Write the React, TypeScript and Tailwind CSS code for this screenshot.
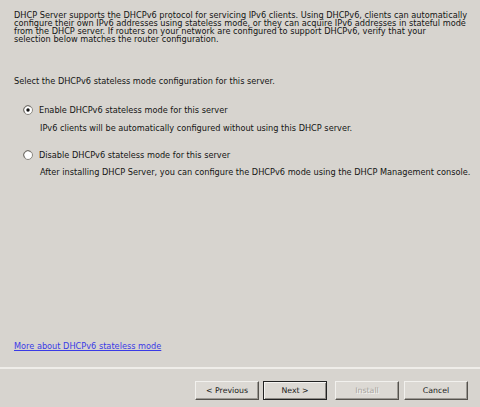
import React from "react"

const font = { fontFamily: '"DejaVu Sans", Tahoma, sans-serif' }

function Radio({ checked }: { checked?: boolean }) {
  return (
    <svg width="10" height="10" viewBox="0 0 10 10" className="shrink-0">
      <circle cx="5" cy="5" r="4.5" fill="#fff" stroke="#8a8780" strokeWidth="1" />
      <path d="M2 7.8 A4 4 0 0 1 7.8 2" fill="none" stroke="#6e6b66" strokeWidth="0.8" />
      {checked && <circle cx="5" cy="5" r="1.7" fill="#111" />}
    </svg>
  )
}

function WizButton({ label, primary, disabled }: { label: string; primary?: boolean; disabled?: boolean }) {
  return (
    <div
      className={
        "h-[19px] w-[64px] flex items-center justify-center bg-[#dcd9d4] border " +
        (primary
          ? "border-[#222] shadow-[inset_1px_1px_0_#f4f3f1,inset_-1px_-1px_0_#8d8a85]"
          : "border-t-[#f2f1ee] border-l-[#f2f1ee] border-b-[#55524d] border-r-[#55524d] shadow-[inset_-1px_-1px_0_#9c9994]")
      }
    >
      <span
        className={
          "text-[7.8px] leading-none " +
          (disabled ? "text-[#a8a5a0] [text-shadow:1px_1px_0_#f4f3f1]" : "text-[#1a1a1a]")
        }
      >
        {label}
      </span>
    </div>
  )
}

export default function App() {
  return (
    <div className="w-[480px] h-[407px] bg-[#d7d4cf] text-[#141414] flex flex-col overflow-hidden" style={font}>
      {/* Intro */}
      <div className="px-[14px] pt-[11px] text-[8.2px] leading-[8px] whitespace-nowrap">
        <div>DHCP Server supports the DHCPv6 protocol for servicing IPv6 clients. Using DHCPv6, clients can automatically</div>
        <div>configure their own IPv6 addresses using stateless mode, or they can acquire IPv6 addresses in stateful mode</div>
        <div>from the DHCP server. If routers on your network are configured to support DHCPv6, verify that your</div>
        <div>selection below matches the router configuration.</div>
      </div>

      <div className="px-[14px] mt-[34px] text-[8.2px] leading-[8px] whitespace-nowrap">
        Select the DHCPv6 stateless mode configuration for this server.
      </div>

      {/* Options */}
      <div className="pl-[23px] mt-[20px] text-[8.2px] leading-[8px] whitespace-nowrap">
        <div className="flex items-center gap-[6px]">
          <Radio checked />
          <span>Enable DHCPv6 stateless mode for this server</span>
        </div>
        <div className="pl-[17px] mt-[9px]">IPv6 clients will be automatically configured without using this DHCP server.</div>

        <div className="flex items-center gap-[6px] mt-[18px]">
          <Radio />
          <span>Disable DHCPv6 stateless mode for this server</span>
        </div>
        <div className="pl-[17px] mt-[8px]">
          After installing DHCP Server, you can configure the DHCPv6 mode using the DHCP Management console.
        </div>
      </div>

      <div className="flex-1" />

      {/* Link */}
      <div className="px-[14px] text-[8.2px] leading-[8px]">
        <span className="text-[#3a3ae6] underline">More about DHCPv6 stateless mode</span>
      </div>

      {/* Separator */}
      <div className="mt-[17px] h-[2px] bg-[#efede9]" />

      {/* Buttons */}
      <div className="flex justify-end pr-[12px] mt-[12px] mb-[7px]">
        <WizButton label="< Previous" />
        <div className="w-[4px]" />
        <WizButton label="Next >" primary />
        <div className="w-[8px]" />
        <WizButton label="Install" disabled />
        <div className="w-[5px]" />
        <WizButton label="Cancel" />
      </div>
    </div>
  )
}
